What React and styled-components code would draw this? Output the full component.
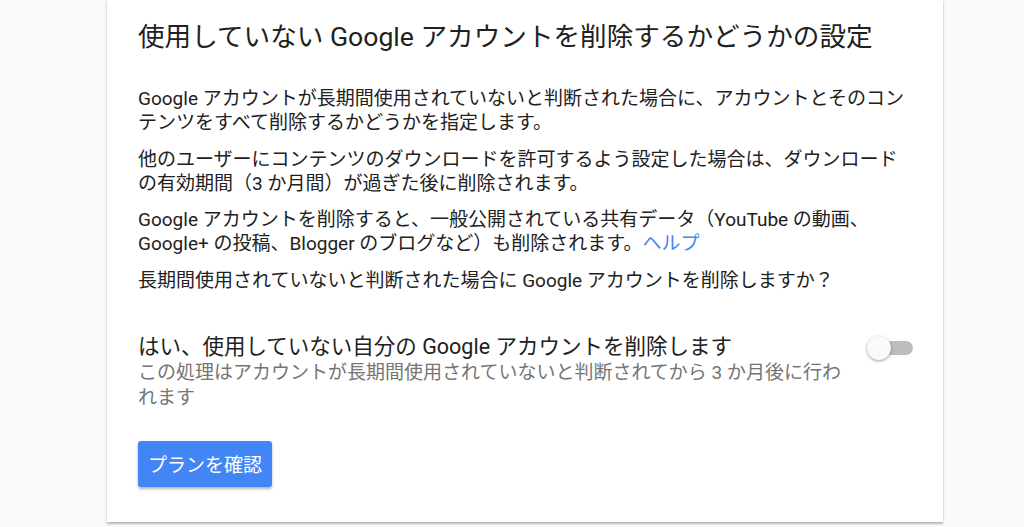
import React, { useState } from "react";
import styled, { createGlobalStyle } from "styled-components";

const GlobalStyle = createGlobalStyle`
  html, body {
    margin: 0;
    padding: 0;
    background: #f9f9f9;
    font-family: Roboto, "Noto Sans CJK JP", sans-serif;
    color: #212121;
  }
`;

const Page = styled.div`
  display: flex;
  padding: 0 81px 6px 107px;
`;

const Card = styled.section`
  flex: 1;
  background: #fff;
  box-shadow: 0 2px 2px rgba(0, 0, 0, 0.24), 0 0 2px rgba(0, 0, 0, 0.12);
  padding: 20px 30px 35px 31px;
`;

const Title = styled.h1`
  margin: 0 0 33px;
  font-size: 26.6px;
  font-weight: 400;
  line-height: 34px;
  color: #212121;
`;

const Text = styled.p`
  margin: 0 0 12.5px;
  font-size: 19px;
  line-height: 24px;
  color: #212121;
`;

const Link = styled.a`
  color: #4285f4;
  text-decoration: none;
`;

const SettingRow = styled.div`
  display: flex;
  align-items: flex-start;
  justify-content: space-between;
  margin-top: 41px;
`;

const SettingText = styled.div`
  width: 720px;
`;

const SettingLabel = styled.div`
  font-size: 21.5px;
  line-height: 26px;
  color: #212121;
`;

const SettingDesc = styled.div`
  font-size: 19px;
  line-height: 25.5px;
  color: #757575;
`;

const Switch = styled.button`
  position: relative;
  width: 46px;
  height: 26px;
  margin-top: 1px;
  padding: 0;
  border: none;
  background: none;
  cursor: pointer;
`;

const Track = styled.span`
  position: absolute;
  left: 2px;
  right: 0;
  top: 6px;
  height: 14px;
  border-radius: 7px;
  background: ${(p) => (p.$on ? "rgba(66,133,244,0.5)" : "#bdbdbd")};
`;

const Thumb = styled.span`
  position: absolute;
  top: 1px;
  left: ${(p) => (p.$on ? "22px" : "0")};
  width: 24px;
  height: 24px;
  border-radius: 50%;
  background: ${(p) => (p.$on ? "#4285f4" : "#fafafa")};
  box-shadow: 0 1px 3px rgba(0, 0, 0, 0.4);
  transition: left 0.15s;
`;

const PrimaryButton = styled.button`
  margin-top: 30px;
  height: 46px;
  padding: 0 10px;
  border: none;
  border-radius: 3px;
  background: #4285f4;
  color: #fff;
  font-family: Roboto, "Noto Sans CJK JP", sans-serif;
  font-size: 19px;
  box-shadow: 0 2px 3px rgba(0, 0, 0, 0.3);
  cursor: pointer;
`;

export default function App() {
  const [on, setOn] = useState(false);

  return (
    <>
      <GlobalStyle />
      <Page>
        <Card>
          <Title>使用していない Google アカウントを削除するかどうかの設定</Title>
          <Text>
            Google アカウントが長期間使用されていないと判断された場合に、アカウントとそのコンテンツをすべて削除するかどうかを指定します。
          </Text>
          <Text>
            他のユーザーにコンテンツのダウンロードを許可するよう設定した場合は、ダウンロードの有効期間（3 か月間）が過ぎた後に削除されます。
          </Text>
          <Text>
            Google アカウントを削除すると、一般公開されている共有データ（YouTube の動画、Google+ の投稿、Blogger のブログなど）も削除されます。<Link href="#">ヘルプ</Link>
          </Text>
          <Text>長期間使用されていないと判断された場合に Google アカウントを削除しますか？</Text>
          <SettingRow>
            <SettingText>
              <SettingLabel>はい、使用していない自分の Google アカウントを削除します</SettingLabel>
              <SettingDesc>
                この処理はアカウントが長期間使用されていないと判断されてから 3 か月後に行われます
              </SettingDesc>
            </SettingText>
            <Switch onClick={() => setOn(!on)} aria-pressed={on}>
              <Track $on={on} />
              <Thumb $on={on} />
            </Switch>
          </SettingRow>
          <PrimaryButton>プランを確認</PrimaryButton>
        </Card>
      </Page>
    </>
  );
}
